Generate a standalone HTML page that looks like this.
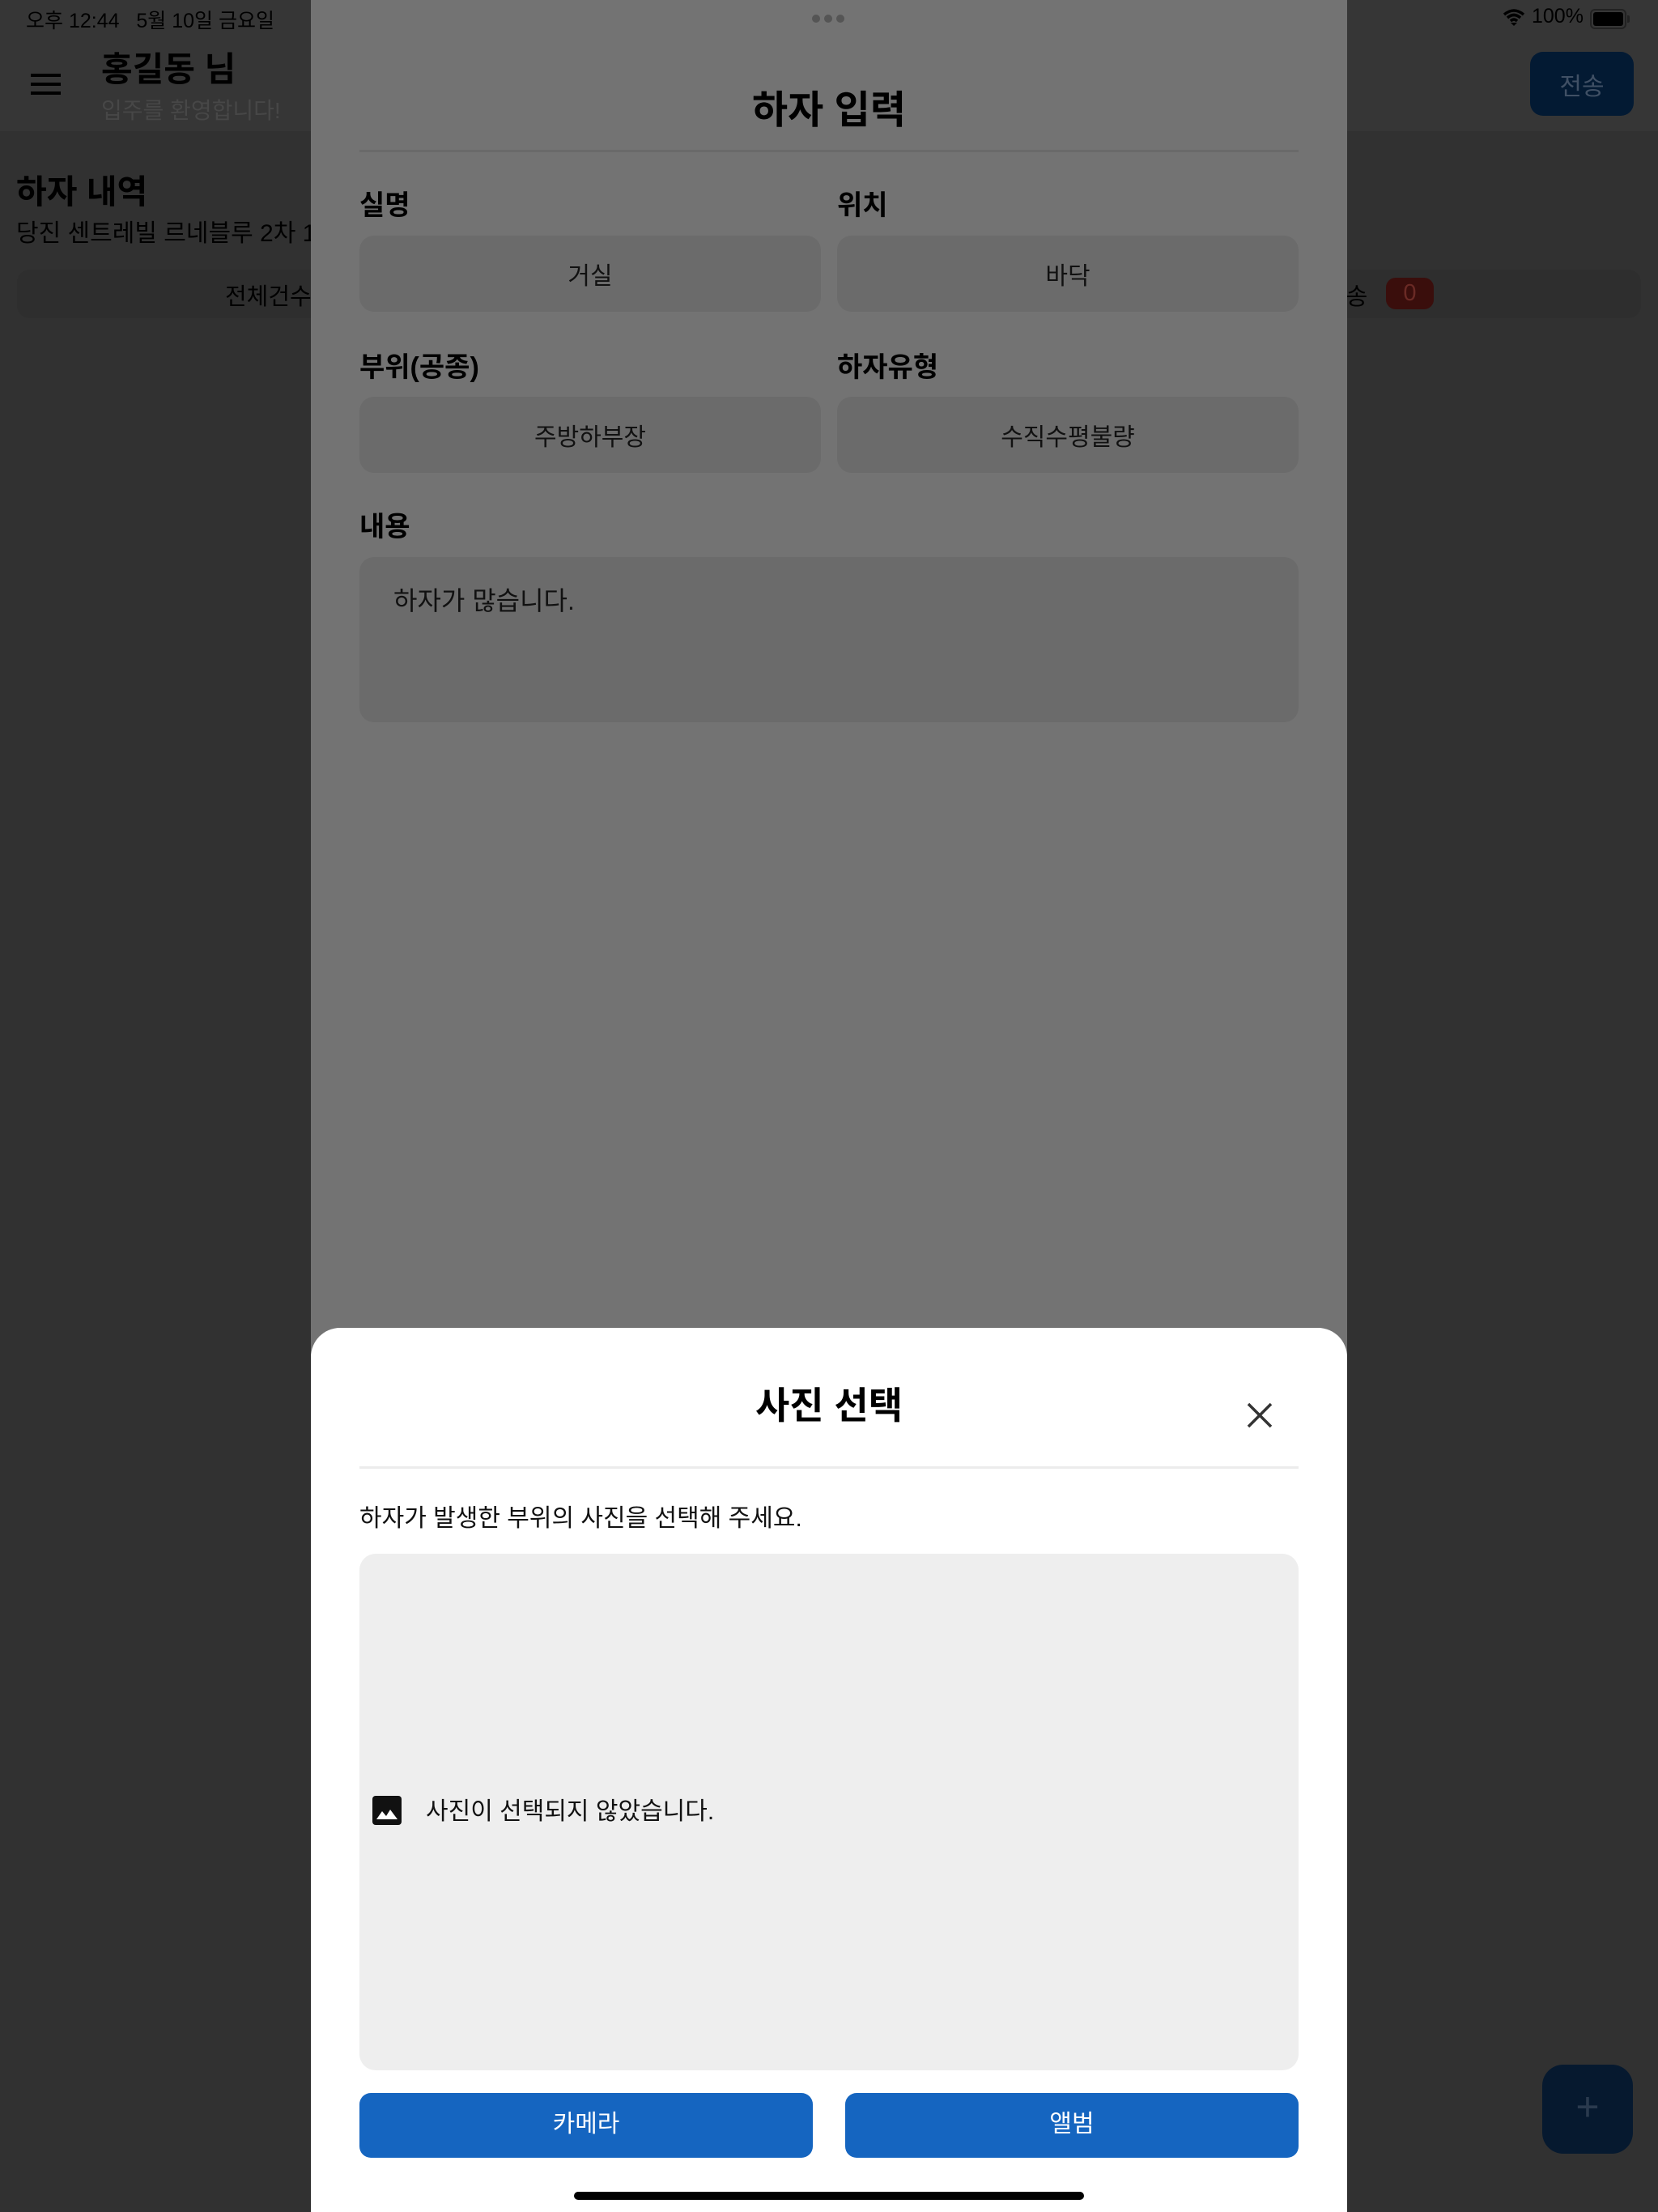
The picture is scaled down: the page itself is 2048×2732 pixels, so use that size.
<!DOCTYPE html>
<html><head><meta charset="utf-8"><style>
*{margin:0;padding:0;box-sizing:border-box}
body{width:2048px;height:2732px;background:#313131;position:relative;overflow:hidden;font-family:"Liberation Sans","Noto Sans CJK KR",sans-serif;color:#000}
.a{position:absolute;white-space:nowrap}
.lbl{font-size:34px;font-weight:bold;color:#000}
.fld{position:absolute;background:#6b6b6b;border-radius:18px;height:94px;display:flex;align-items:center;justify-content:center;font-size:30px;color:#111}
</style></head><body>
<div class="a" style="left:0;top:0;width:2048px;height:162px;background:#363636"></div>
<div class="a" style="left:32px;top:6px;font-size:25px;color:#000">오후 12:44&nbsp;&nbsp;&nbsp;5월 10일 금요일</div>
<div class="a" style="left:1892px;top:6px;font-size:25px;color:#000">100%</div>
<svg class="a" style="left:1856px;top:10px" width="28" height="24" viewBox="0 0 28 24"><path d="M2 8 Q14 -2 26 8 M6 12 Q14 5 22 12 M10 16 Q14 12 18 16" stroke="#000" stroke-width="3.5" fill="none"/><path d="M14 22 L10 18 L18 18Z" fill="#000"/></svg>
<div class="a" style="left:1964px;top:11px;width:45px;height:25px;border:2px solid #222;border-radius:6px;padding:2px"><div style="width:100%;height:100%;background:#000;border-radius:3px"></div></div>
<div class="a" style="left:2010px;top:19px;width:3px;height:9px;background:#222;border-radius:0 2px 2px 0"></div>
<div class="a" style="left:38px;top:91px;width:37px;height:4px;background:#000;box-shadow:0 11px 0 #000,0 22px 0 #000"></div>
<div class="a" style="left:125px;top:52px;font-size:42px;font-weight:bold">홍길동 님</div>
<div class="a" style="left:125px;top:115px;font-size:28px;color:#474747">입주를 환영합니다!</div>
<div class="a" style="left:1890px;top:64px;width:128px;height:79px;background:#031a33;border-radius:16px;font-size:30px;color:#405065;display:flex;align-items:center;justify-content:center">전송</div>
<div class="a" style="left:20px;top:203px;font-size:41px;font-weight:bold">하자 내역</div>
<div class="a" style="left:20px;top:263px;font-size:30px;color:#000">당진 센트레빌 르네블루 2차 1</div>
<div class="a" style="left:21px;top:333px;width:2006px;height:60px;background:#2e2e2e;border-radius:16px"></div>
<div class="a" style="left:278px;top:343px;font-size:29px;color:#000">전체건수</div>
<div class="a" style="left:1636px;top:343px;font-size:29px;color:#000">전송</div>
<div class="a" style="left:1712px;top:343px;width:59px;height:39px;background:#3a0e0c;border-radius:12px;font-size:29px;color:#6a2a25;text-align:center;line-height:39px">0</div>
<div class="a" style="left:1905px;top:2550px;width:112px;height:110px;background:#06192f;border-radius:26px;font-size:50px;color:#2a3a4e;text-align:center;line-height:104px">+</div>

<div class="a" style="left:384px;top:0;width:1280px;height:2732px;background:#737373"></div>
<div class="a" style="left:1003px;top:18px;width:10px;height:10px;border-radius:50%;background:#555;box-shadow:15px 0 0 #555,30px 0 0 #555"></div>
<div class="a" style="left:384px;top:96px;width:1280px;text-align:center;font-size:48px;font-weight:bold">하자 입력</div>
<div class="a" style="left:444px;top:185px;width:1160px;height:3px;background:#6a6a6a"></div>
<div class="a lbl" style="left:444px;top:226px">실명</div>
<div class="a lbl" style="left:1034px;top:226px">위치</div>
<div class="fld" style="left:444px;top:291px;width:570px">거실</div>
<div class="fld" style="left:1034px;top:291px;width:570px">바닥</div>
<div class="a lbl" style="left:444px;top:426px">부위(공종)</div>
<div class="a lbl" style="left:1034px;top:426px">하자유형</div>
<div class="fld" style="left:444px;top:490px;width:570px">주방하부장</div>
<div class="fld" style="left:1034px;top:490px;width:570px">수직수평불량</div>
<div class="a lbl" style="left:444px;top:623px">내용</div>
<div class="a" style="left:444px;top:688px;width:1160px;height:204px;background:#6b6b6b;border-radius:18px"></div>
<div class="a" style="left:486px;top:717px;font-size:32px;color:#111">하자가 많습니다.</div>

<div class="a" style="left:384px;top:1640px;width:1280px;height:1092px;background:#fff;border-radius:36px 36px 0 0"></div>
<div class="a" style="left:384px;top:1700px;width:1280px;text-align:center;font-size:46px;font-weight:bold">사진 선택</div>
<svg class="a" style="left:1538px;top:1730px" width="36" height="36" viewBox="0 0 36 36"><path d="M4 4L32 32M32 4L4 32" stroke="#333" stroke-width="3.5"/></svg>
<div class="a" style="left:444px;top:1811px;width:1160px;height:3px;background:#ececec"></div>
<div class="a" style="left:444px;top:1850px;font-size:30px;color:#111">하자가 발생한 부위의 사진을 선택해 주세요.</div>
<div class="a" style="left:444px;top:1919px;width:1160px;height:638px;background:#eeeeee;border-radius:20px"></div>
<svg class="a" style="left:460px;top:2218px" width="36" height="36" viewBox="0 0 36 36"><rect x="0" y="0" width="36" height="36" rx="4" fill="#111"/><path d="M5 29 L12 19 L17 25 L22 17 L31 29Z" fill="#fff"/></svg>
<div class="a" style="left:526px;top:2212px;font-size:30px;color:#111">사진이 선택되지 않았습니다.</div>
<div class="a" style="left:444px;top:2585px;width:560px;height:80px;background:#1565c0;border-radius:14px;color:#fff;font-size:30px;text-align:center;line-height:78px">카메라</div>
<div class="a" style="left:1044px;top:2585px;width:560px;height:80px;background:#1565c0;border-radius:14px;color:#fff;font-size:30px;text-align:center;line-height:78px">앨범</div>
<div class="a" style="left:709px;top:2707px;width:630px;height:10px;background:#000;border-radius:5px"></div>
</body></html>
